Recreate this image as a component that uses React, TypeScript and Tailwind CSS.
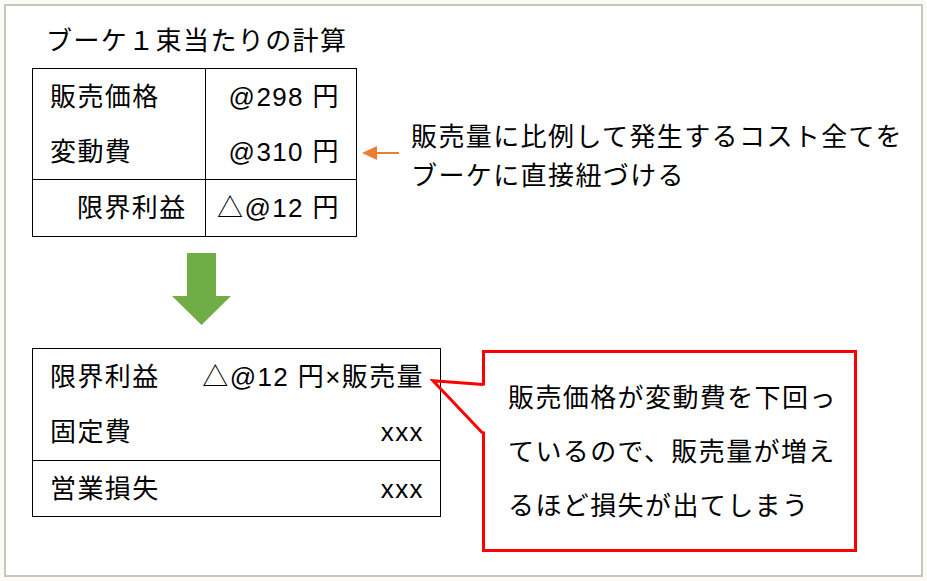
export default function App() {
  return (
    <div className="h-[581px] w-[927px] bg-[#fbfaf5] p-1 font-['Liberation_Sans','Noto_Sans_CJK_JP',sans-serif] text-[26px] tracking-[1.4px] text-black">
      <div className="relative h-full border-2 border-[#c6c6c2] bg-white pl-[26px] pt-[22px]">
        <div className="ml-[14px] leading-[27px]">ブーケ１束当たりの計算</div>

        <div className="mt-[13px] flex items-start">
          <div className="w-[325px] border border-black leading-none">
            <div className="flex h-[110px]">
              <div className="w-[173px] border-r border-black">
                <div className="flex h-[55px] items-center pl-[17px]">販売価格</div>
                <div className="flex h-[55px] items-center pl-[17px]">変動費</div>
              </div>
              <div className="flex-1">
                <div className="flex h-[55px] items-center justify-end pr-[16px]">@298 円</div>
                <div className="flex h-[55px] items-center justify-end pr-[16px]">@310 円</div>
              </div>
            </div>
            <div className="flex h-[57px] border-t border-black">
              <div className="flex w-[173px] items-center border-r border-black pl-[44px]">限界利益</div>
              <div className="flex flex-1 items-center justify-end pr-[16px]">△@12 円</div>
            </div>
          </div>

          <div className="ml-[5px] flex items-start">
            <svg width="40" height="16" viewBox="0 0 40 16" className="mt-[77px]">
              <polygon points="0,8 15,1 15,15" fill="#ed7d31" />
              <line x1="14" y1="8" x2="37" y2="8" stroke="#ed7d31" strokeWidth="2" />
            </svg>
            <div className="ml-[9px] mt-[50px] leading-[39px]">
              販売量に比例して発生するコスト全てを
              <br />
              ブーケに直接紐づける
            </div>
          </div>
        </div>

        <svg width="60" height="72" viewBox="0 0 60 72" className="ml-[140px] mt-[16px]">
          <polygon points="15,0 44,0 44,43 59,43 29.5,72 0,43 15,43" fill="#70ad47" />
        </svg>

        <div className="mt-[23px] flex items-start">
          <div className="w-[409px] border border-black leading-none">
            <div className="flex h-[111px] flex-col">
              <div className="flex h-[55.5px] items-center justify-between pl-[17px] pr-[16px]">
                <span>限界利益</span>
                <span>△@12 円×販売量</span>
              </div>
              <div className="flex h-[55.5px] items-center justify-between pl-[17px] pr-[16px]">
                <span>固定費</span>
                <span>xxx</span>
              </div>
            </div>
            <div className="flex h-[56px] items-center justify-between border-t border-black pl-[17px] pr-[16px]">
              <span>営業損失</span>
              <span>xxx</span>
            </div>
          </div>

          <div className="relative ml-[41px] mt-[2px] h-[202px] w-[375px] border-[3px] border-[#ff0000] pl-[23px] pt-[18px] leading-[54px]">
            <svg width="58" height="64" viewBox="0 0 58 64" className="absolute left-[-55px] top-[22px]">
              <rect x="51.5" y="10.5" width="4" height="46" fill="#ffffff" />
              <polyline
                points="53,9.5 3,5.7 52.5,58"
                fill="none"
                stroke="#ff0000"
                strokeWidth="3"
                strokeLinejoin="miter"
              />
            </svg>
            販売価格が変動費を下回っ
            <br />
            ているので、販売量が増え
            <br />
            るほど損失が出てしまう
          </div>
        </div>
      </div>
    </div>
  )
}
